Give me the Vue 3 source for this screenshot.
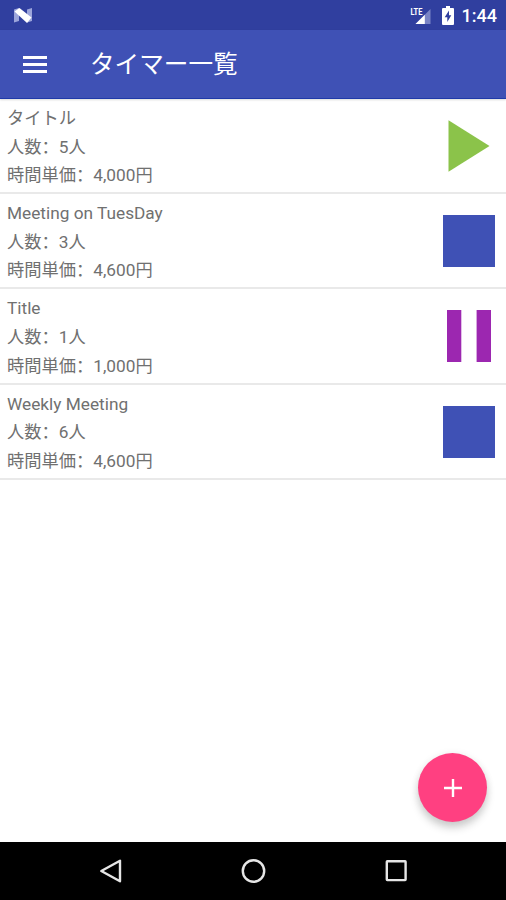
<template>
  <div class="screen">
    <div class="status-bar">
      <svg class="n-logo" viewBox="0 0 20 18" width="20" height="18">
        <path d="M1 2.5l5-1.5v13l-5 1.5zM14 2.5l5-1.5v13l-5 1.5z" fill="#9ca5db" />
        <path d="M1.5 4.5L6.5 1l12 9.5L14 16z" fill="#fff" />
      </svg>
      <svg class="signal" viewBox="0 0 24 20" width="24" height="20">
        <path d="M20.5 4v15H5.5z" fill="#7983c5" />
        <path d="M14.8 9.7V19H5.5z" fill="#fff" />
        <text x="0.4" y="9.6" textLength="12" lengthAdjust="spacingAndGlyphs">LTE</text>
      </svg>
      <svg class="battery" viewBox="0 0 12 19" width="12" height="19">
        <path d="M4 0h4v2h3q1 0 1 1v15q0 1-1 1H1q-1 0-1-1V3q0-1 1-1h3z" fill="#fff" />
        <path d="M7 4.5L2.7 11.2H5.3V16L9.3 9.3H7z" fill="#303f9f" />
      </svg>
      <span class="clock">1:44</span>
    </div>

    <header class="toolbar">
      <button type="button" class="menu-button" aria-label="メニュー">
        <span></span>
        <span></span>
        <span></span>
      </button>
      <h1>タイマー一覧</h1>
    </header>

    <main class="content">
      <ul class="timer-list">
        <li v-for="timer in timers" :key="timer.title" class="timer">
          <div class="info">
            <p>{{ timer.title }}</p>
            <p>人数<span class="colon">：</span>{{ timer.people }}人</p>
            <p>時間単価<span class="colon">：</span>{{ timer.price.toLocaleString('en-US') }}円</p>
          </div>
          <svg class="state" viewBox="0 0 52 52" width="52" height="52">
            <path v-if="timer.state === 'play'" d="M5.5 0.3L46.5 26 5.5 51.7z" fill="#8bc34a" />
            <path v-else-if="timer.state === 'pause'" d="M4 0h14.3v52H4zM33.6 0H48v52H33.6z" fill="#9c27b0" />
            <path v-else d="M0 0h52v52H0z" fill="#3f51b5" />
          </svg>
        </li>
      </ul>
      <button type="button" class="fab" aria-label="追加">
        <svg viewBox="0 0 18 18" width="18" height="18">
          <path d="M9 0v18M0 9h18" stroke="#fff" stroke-width="2.4" />
        </svg>
      </button>
    </main>

    <nav class="nav-bar">
      <svg viewBox="0 0 26 26" width="26" height="26">
        <path d="M22 2.7v20.6L3.3 13z" />
      </svg>
      <svg viewBox="0 0 26 26" width="26" height="26">
        <circle cx="13.5" cy="13" r="10.7" />
      </svg>
      <svg viewBox="0 0 26 26" width="26" height="26">
        <rect x="3.8" y="3.3" width="18.8" height="18.8" rx="0.5" />
      </svg>
    </nav>
  </div>
</template>

<script setup>
const timers = [
  { title: 'タイトル', people: 5, price: 4000, state: 'play' },
  { title: 'Meeting on TuesDay', people: 3, price: 4600, state: 'stop' },
  { title: 'Title', people: 1, price: 1000, state: 'pause' },
  { title: 'Weekly Meeting', people: 6, price: 4600, state: 'stop' },
];
</script>

<style>
body {
  margin: 0;
}
</style>

<style scoped>
.screen {
  width: 100%;
  height: 900px;
  display: flex;
  flex-direction: column;
  overflow: hidden;
  background: #fff;
  font-family: Roboto, "Noto Sans CJK JP", sans-serif;
}

button {
  border: 0;
  padding: 0;
  cursor: pointer;
}

.status-bar {
  box-sizing: border-box;
  flex: 0 0 30px;
  display: flex;
  align-items: center;
  padding: 0 9px 0 13px;
  background: #303f9f;
  color: #fff;
}

.n-logo {
  margin-top: 1px;
}

.signal {
  margin-left: auto;
}

.signal text {
  fill: #fff;
  font-size: 9.5px;
  font-weight: 700;
}

.battery {
  margin: 0 8px 0 8px;
}

.clock {
  font-size: 18px;
  font-weight: 500;
  line-height: 28px;
  padding-top: 2px;
}

.toolbar {
  box-sizing: border-box;
  flex: 0 0 69px;
  display: flex;
  align-items: center;
  padding-left: 23px;
  background: #3f51b5;
  border-bottom: 1px solid #1f3aa9;
  box-shadow: 0 1px 2px rgba(0, 0, 0, 0.15);
  z-index: 1;
}

.menu-button {
  width: 24px;
  display: flex;
  flex-direction: column;
  gap: 4px;
  background: none;
}

.menu-button span {
  height: 3px;
  background: #fff;
}

h1 {
  margin: 0 0 0 43px;
  padding-top: 2px;
  color: #fff;
  font-size: 24.6px;
  font-weight: 400;
  line-height: 36px;
}

.content {
  flex: 1;
  position: relative;
}

.timer-list {
  margin: 0;
  padding: 0;
  list-style: none;
}

.timer {
  box-sizing: border-box;
  height: 95.2px;
  display: flex;
  justify-content: space-between;
  padding: 5px 11px 0 7px;
  border-bottom: 2px solid #e9e9e9;
}

.info p {
  margin: 0;
  color: #707070;
  font-size: 17.25px;
  line-height: 28.6px;
  white-space: nowrap;
}

/* full-width colon that sits at the left of its cell */
.colon {
  font-family: "Noto Sans CJK SC", sans-serif;
  line-height: 1;
}

.state {
  margin-top: 16px;
}

.fab {
  position: absolute;
  right: 19px;
  bottom: 20px;
  width: 69px;
  height: 69px;
  display: flex;
  align-items: center;
  justify-content: center;
  border-radius: 50%;
  background: #ff4081;
  box-shadow: 0 6px 8px rgba(0, 0, 0, 0.18), 0 1px 8px rgba(0, 0, 0, 0.07);
}

.nav-bar {
  flex: 0 0 58px;
  display: flex;
  align-items: center;
  justify-content: center;
  gap: 116.5px;
  background: #000;
}

.nav-bar svg {
  fill: none;
  stroke: #e6e6e6;
  stroke-width: 2.4;
  stroke-linejoin: round;
}
</style>
